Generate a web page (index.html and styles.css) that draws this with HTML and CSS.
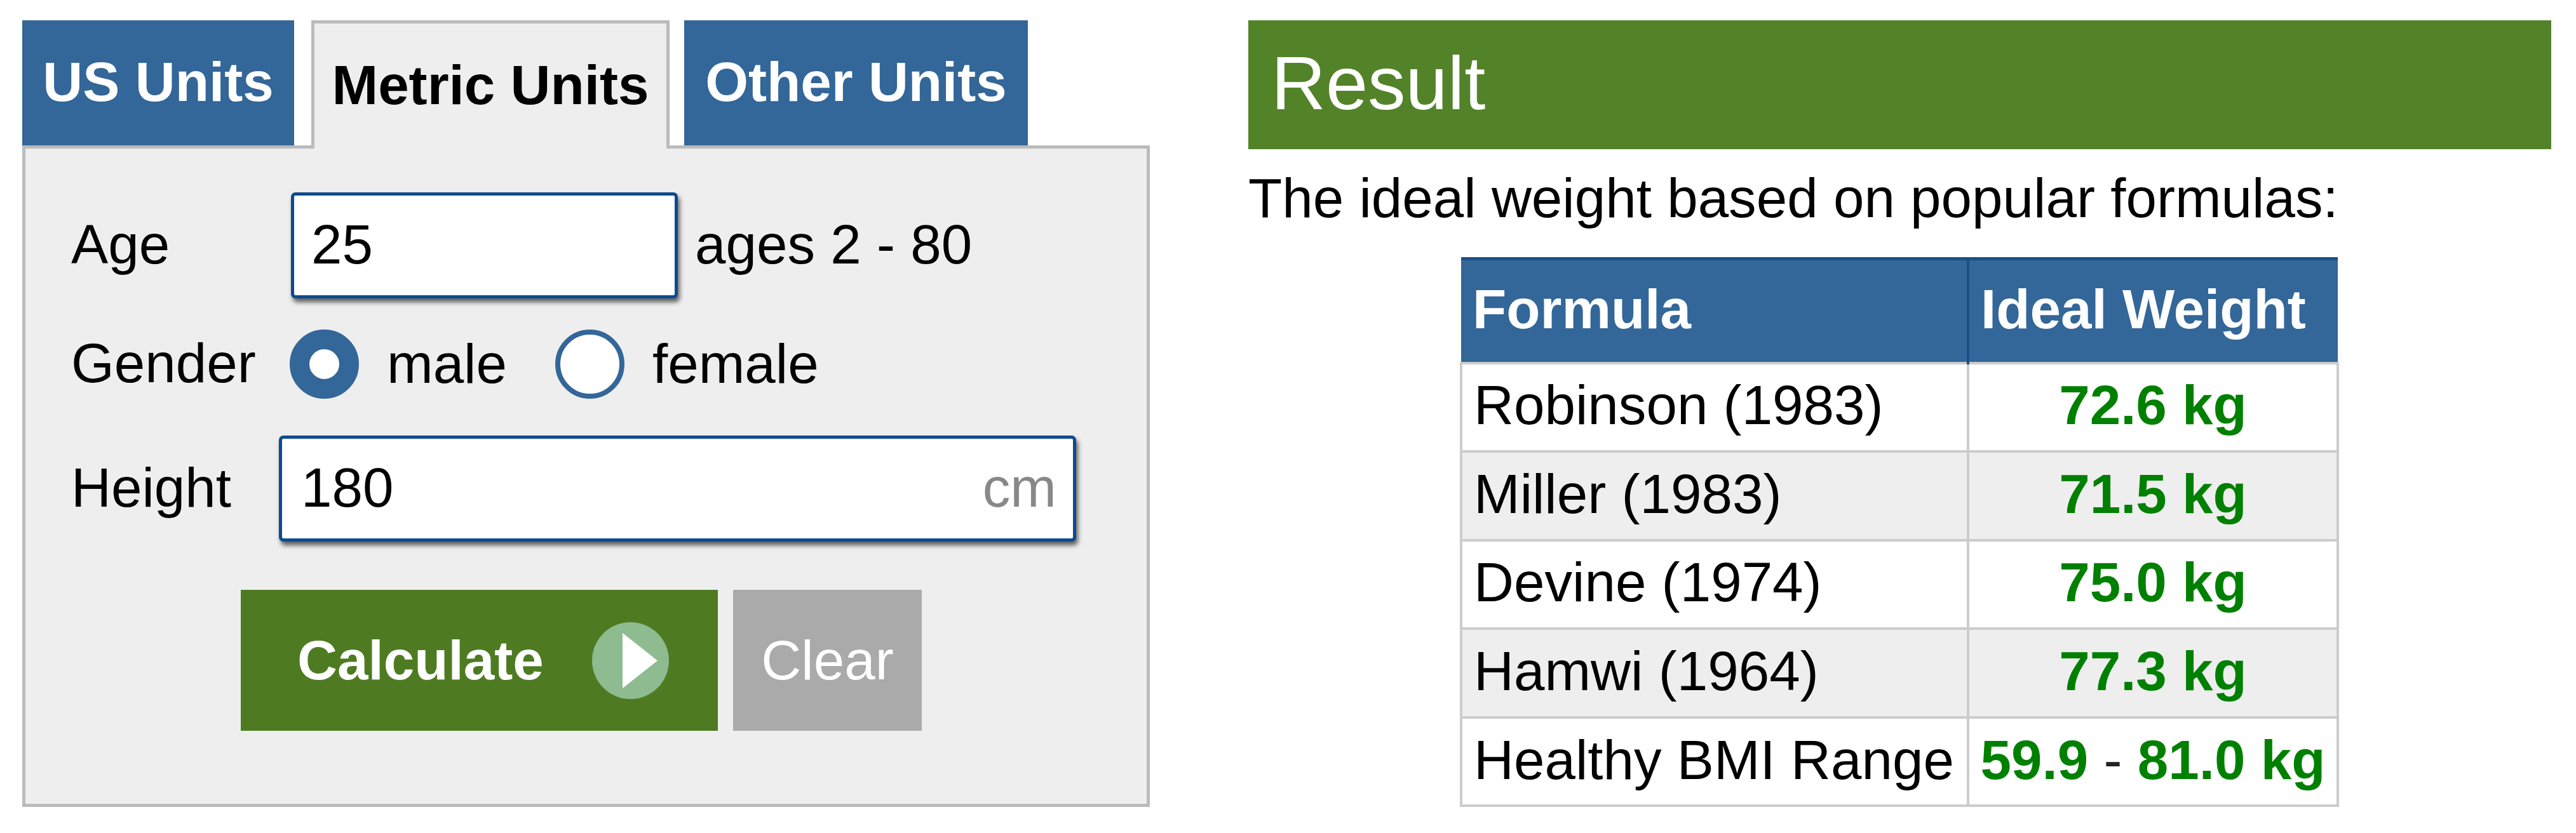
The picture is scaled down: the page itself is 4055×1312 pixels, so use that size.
FILE: index.html
```html
<!DOCTYPE html>
<html lang="en">
<head>
<meta charset="utf-8">
<title>Ideal Weight Calculator</title>
<link rel="stylesheet" href="styles.css">
</head>
<body>
<main class="page">
  <section class="calc">
    <nav class="tabs">
      <a class="tab tab-us">US Units</a>
      <a class="tab tab-metric">Metric Units</a>
      <a class="tab tab-other">Other Units</a>
    </nav>
    <form class="panel">
      <div class="row row-age">
        <label class="label label-age">Age</label>
        <div class="field field-age"><span>25</span></div>
        <span class="hint">ages 2 - 80</span>
      </div>
      <div class="row row-gender">
        <label class="label label-gender">Gender</label>
        <span class="radio radio-on"></span>
        <span class="radio-text text-male">male</span>
        <span class="radio"></span>
        <span class="radio-text">female</span>
      </div>
      <div class="row row-height">
        <label class="label label-height">Height</label>
        <div class="field field-height"><span>180</span><span class="unit">cm</span></div>
      </div>
      <div class="row row-buttons">
        <button type="button" class="btn btn-calc">Calculate
          <svg class="play" viewBox="0 0 121 121" aria-hidden="true">
            <circle cx="60.5" cy="60.5" r="60.5" fill="#8fbb91"/>
            <polygon points="48,17 103,60.5 48,104" fill="#fff"/>
          </svg>
        </button>
        <button type="button" class="btn btn-clear">Clear</button>
      </div>
    </form>
  </section>
  <section class="result">
    <h2 class="result-title">Result</h2>
    <p class="intro">The ideal weight based on popular formulas:</p>
    <div class="table-wrap">
      <table class="formulas">
        <thead>
          <tr><th class="col-name">Formula</th><th class="col-value">Ideal Weight</th></tr>
        </thead>
        <tbody>
          <tr><td>Robinson (1983)</td><td class="value">72.6 kg</td></tr>
          <tr class="alt"><td>Miller (1983)</td><td class="value">71.5 kg</td></tr>
          <tr><td>Devine (1974)</td><td class="value">75.0 kg</td></tr>
          <tr class="alt"><td>Hamwi (1964)</td><td class="value">77.3 kg</td></tr>
          <tr><td>Healthy BMI Range</td><td class="value">59.9 <span class="dash">-</span> 81.0 kg</td></tr>
        </tbody>
      </table>
    </div>
  </section>
</main>
</body>
</html>
```
FILE: styles.css
```css
* { box-sizing: border-box; }
html, body { margin: 0; padding: 0; background: #fff; }
body { font-family: "Liberation Sans", Arial, sans-serif; font-size: 87.2px; color: #000; }

.page { display: flex; align-items: flex-start; padding: 32px 39px 0 35px; height: 1312px; }

.calc { width: 1775px; flex: none; }
.tabs { display: flex; height: 197px; position: relative; z-index: 1; }
.tab { display: flex; align-items: center; justify-content: center; font-weight: bold; color: #fff; background: #336699; height: 197px; padding-bottom: 4px; }
.tab-us { width: 428px; }
.tab-metric { width: 564px; margin-left: 27px; color: #000; background: #eee; border: 5px solid #bbb; border-bottom: 0; height: 202px; }
.tab-other { width: 541px; margin-left: 23px; }

.panel { background: #eee; border: 5px solid #bbb; height: 1042px; padding-left: 72px; }
.row { display: flex; align-items: center; }
.row-age { margin-top: 69px; height: 167px; padding-bottom: 0; }
.row-gender { margin-top: 48px; height: 110px; }
.row-height { margin-top: 58px; height: 167px; }
.row-buttons { margin-top: 76px; margin-left: 267px; height: 222px; gap: 24px; }

.label { display: block; padding-bottom: 3px; }
.label-age { width: 346px; }
.label-gender { width: 344px; }
.label-height { width: 327px; }

.field { display: flex; align-items: center; justify-content: space-between; height: 100%; background: #fff; border: 5px solid #0c4a90; border-radius: 7px; box-shadow: 3px 6px 7px rgba(0, 0, 0, .6); padding-bottom: 3px; }
.field-age { width: 609px; padding-left: 27px; }
.field-height { width: 1255px; padding-left: 30px; padding-right: 26px; }
.unit { color: #888; }
.hint { margin-left: 27px; padding-bottom: 3px; }

.radio { flex: none; width: 109px; height: 109px; border-radius: 50%; background: #fff; border: 8px solid #336699; }
.radio-on { background: #fff; border: 31px solid #336699; }
.radio-text { margin-left: 44px; }
.text-male { margin-right: 76px; }

.btn { display: flex; align-items: center; height: 222px; border: 0; border-radius: 0; color: #fff; font: inherit; padding: 0; }
.btn-calc { width: 751px; background: #4e7b22; font-weight: bold; padding-left: 89px; }
.play { width: 121px; height: 121px; margin-left: 76px; }
.btn-clear { width: 297px; background: #aaa; justify-content: center; }

.result { flex: 1; margin-left: 155px; }
.result-title { margin: 0; height: 203px; display: flex; align-items: center; padding-left: 36px; padding-bottom: 6px; background: #538329; color: #fff; font-size: 119px; font-weight: normal; }
.intro { margin: 27px 0 0; line-height: 100px; height: 143px; }
.table-wrap { display: flex; justify-content: flex-start; padding-left: 333px; }
.formulas { border-collapse: collapse; table-layout: fixed; width: 1384px; }
.formulas th, .formulas td { padding: 0 0 6px 18px; text-align: left; border: 4px solid #ccc; height: 139.6px; white-space: nowrap; }
.formulas th { background: #336699; color: #fff; border: 0; border-left: 4px solid #1d4f86; height: 164px; border-top: 5px solid #1d4f86; }
.formulas th:first-child { border-left: 0; }
.col-name { width: 798px; }
.alt td { background: #eee; }
.formulas .value { padding: 0 0 6px; text-align: center; color: #008000; font-weight: bold; }
.dash { color: #222; font-weight: normal; }
```
